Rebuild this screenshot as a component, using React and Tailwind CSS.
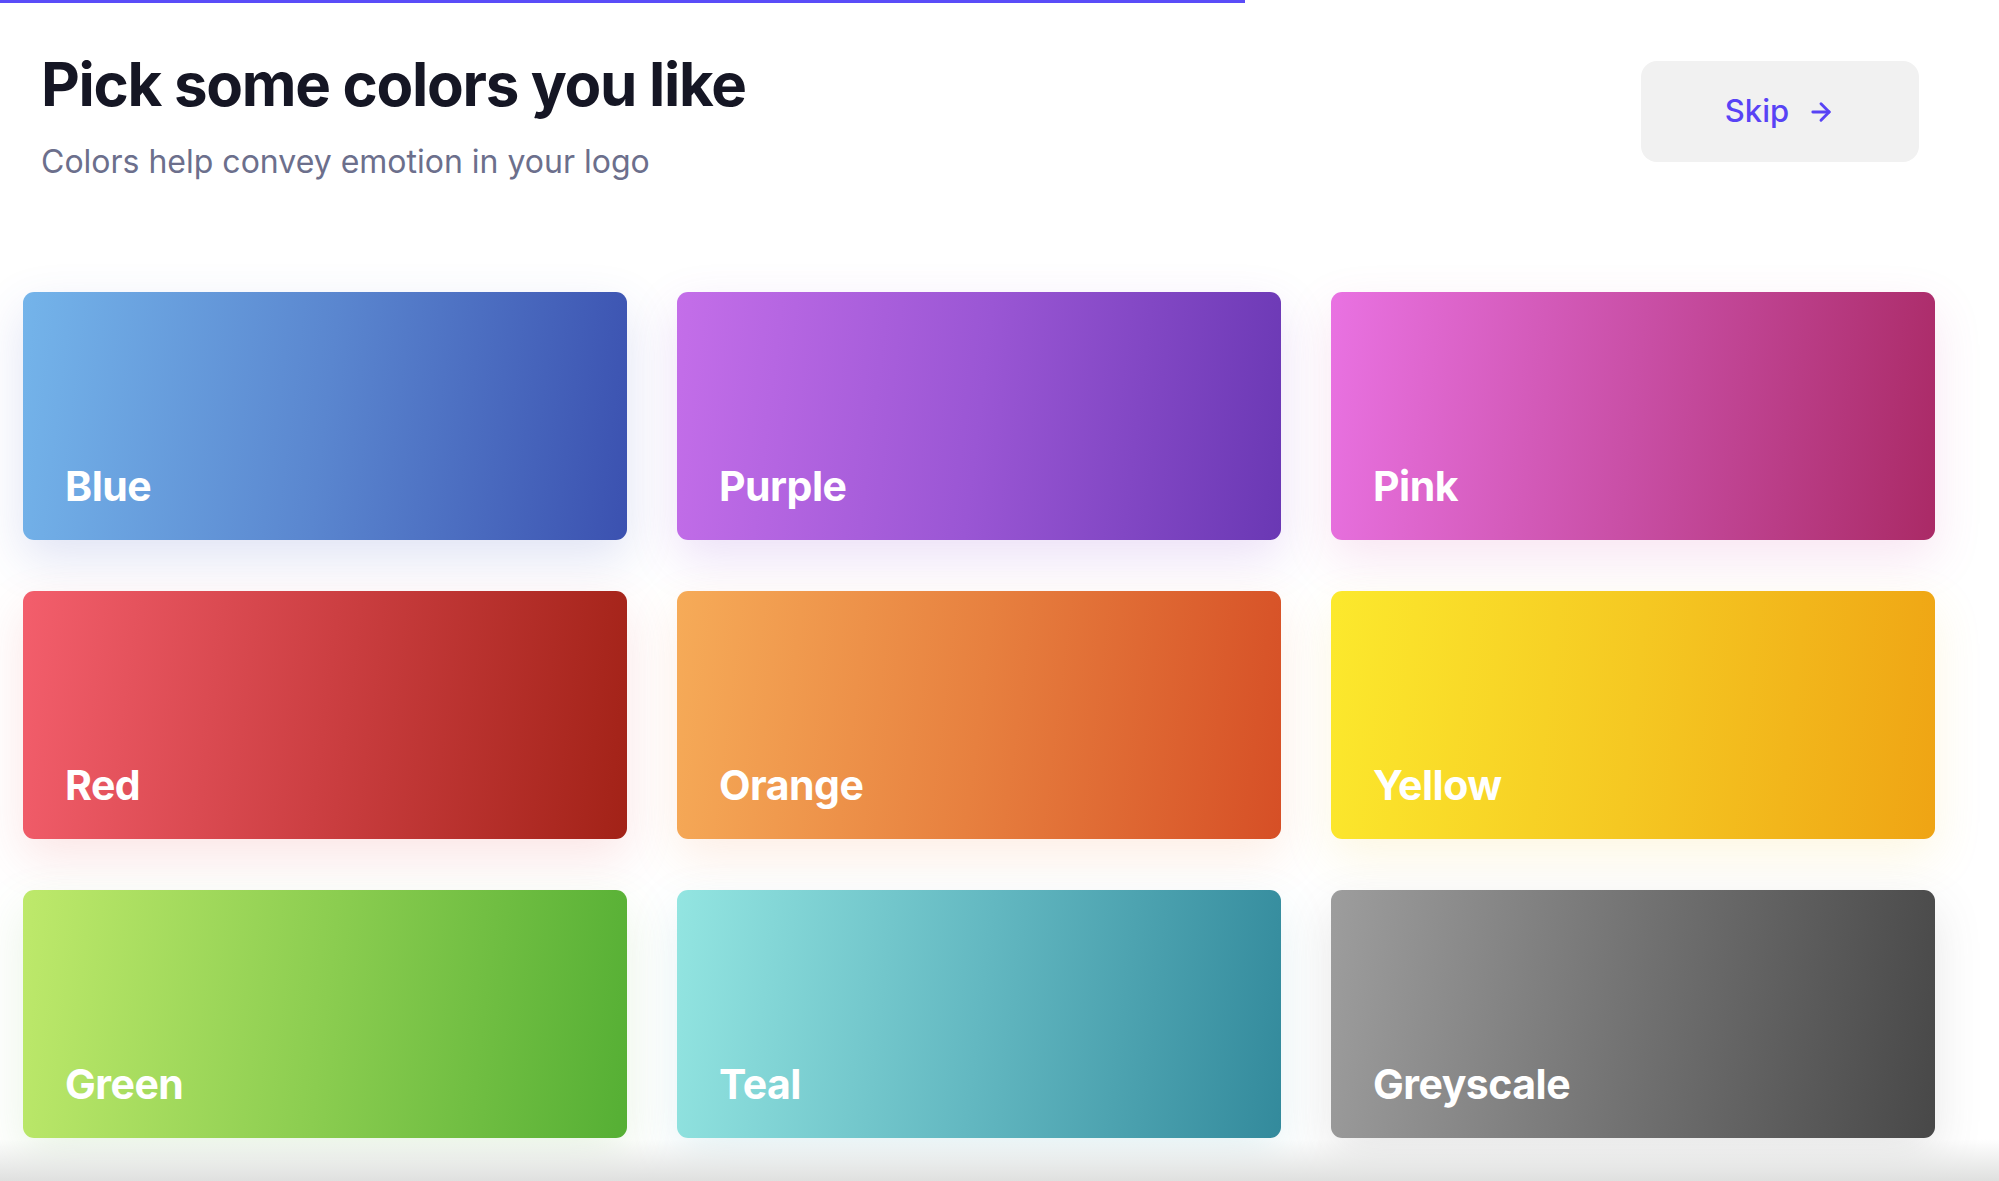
import React from "react";
import { ArrowRight } from "lucide-react";

const colors = [
  { name: "Blue", bg: "bg-[linear-gradient(97deg,#74b4ea_0%,#5a86cf_50%,#3b51b0_100%)]", shadow: "shadow-[0_18px_48px_rgba(70,90,190,0.17)]" },
  { name: "Purple", bg: "bg-[linear-gradient(97deg,#c46ee9_0%,#9a56d4_50%,#6a38b4_100%)]", shadow: "shadow-[0_18px_48px_rgba(140,70,210,0.17)]" },
  { name: "Pink", bg: "bg-[linear-gradient(97deg,#e972e2_0%,#c94fa6_50%,#aa2a66_100%)]", shadow: "shadow-[0_18px_48px_rgba(210,80,170,0.15)]" },
  { name: "Red", bg: "bg-[linear-gradient(97deg,#f35e6c_0%,#cc3f42_50%,#a22217_100%)]", shadow: "shadow-[0_18px_48px_rgba(230,80,80,0.15)]" },
  { name: "Orange", bg: "bg-[linear-gradient(97deg,#f6ab58_0%,#e7803f_50%,#d64f26_100%)]", shadow: "shadow-[0_18px_48px_rgba(240,140,80,0.15)]" },
  { name: "Yellow", bg: "bg-[linear-gradient(97deg,#fce92d_0%,#f5c822_50%,#efa414_100%)]", shadow: "shadow-[0_18px_48px_rgba(240,200,60,0.15)]" },
  { name: "Green", bg: "bg-[linear-gradient(97deg,#bee96b_0%,#8bcd50_50%,#55af34_100%)]", shadow: "shadow-[0_18px_48px_rgba(110,180,80,0.15)]" },
  { name: "Teal", bg: "bg-[linear-gradient(97deg,#93e5e1_0%,#63b8c1_50%,#338a9c_100%)]", shadow: "shadow-[0_18px_48px_rgba(80,170,180,0.15)]" },
  { name: "Greyscale", bg: "bg-[linear-gradient(97deg,#9d9d9d_0%,#727272_50%,#484848_100%)]", shadow: "shadow-[0_18px_48px_rgba(90,90,90,0.15)]" },
];

const ColorCard = ({ color }) => {
  return (
    <button
      className={`h-[248px] w-full rounded-[11px] flex items-end px-[42px] pb-[33px] text-left ${color.bg} ${color.shadow}`}
    >
      <span className="text-[41px] leading-none font-bold text-white tracking-[-0.5px]">
        {color.name}
      </span>
    </button>
  );
};

export default function App() {
  return (
    <div className="relative min-h-screen w-full bg-white overflow-hidden font-['Inter','Liberation_Sans',sans-serif]">
      <div className="h-[3px] w-[1245px] bg-[#5a4cf8]" />

      <div className="flex justify-between items-start pl-[41px] pr-[80px]">
        <div className="pt-[45px]">
          <h1 className="text-[60px] leading-[72px] font-bold text-[#151624] tracking-[-1.3px]">
            Pick some colors you like
          </h1>
          <p className="mt-[21px] text-[32px] leading-[42px] text-[#6c6f8c]">
            Colors help convey emotion in your logo
          </p>
        </div>
        <button className="mt-[58px] w-[278px] h-[101px] rounded-[16px] bg-[#f1f1f1] flex items-center justify-center gap-[18px] text-[#5843f5]">
          <span className="text-[31px] font-medium">Skip</span>
          <ArrowRight size={28} strokeWidth={2.5} />
        </button>
      </div>

      <div className="ml-[23px] mt-[109px] w-[1912px] grid grid-cols-3 gap-x-[50px] gap-y-[51px]">
        {colors.map((c) => (
          <ColorCard key={c.name} color={c} />
        ))}
      </div>

      <div className="absolute bottom-0 left-0 right-0 h-[42px] bg-linear-to-t from-[#dfe0df] to-transparent" />
    </div>
  );
}
